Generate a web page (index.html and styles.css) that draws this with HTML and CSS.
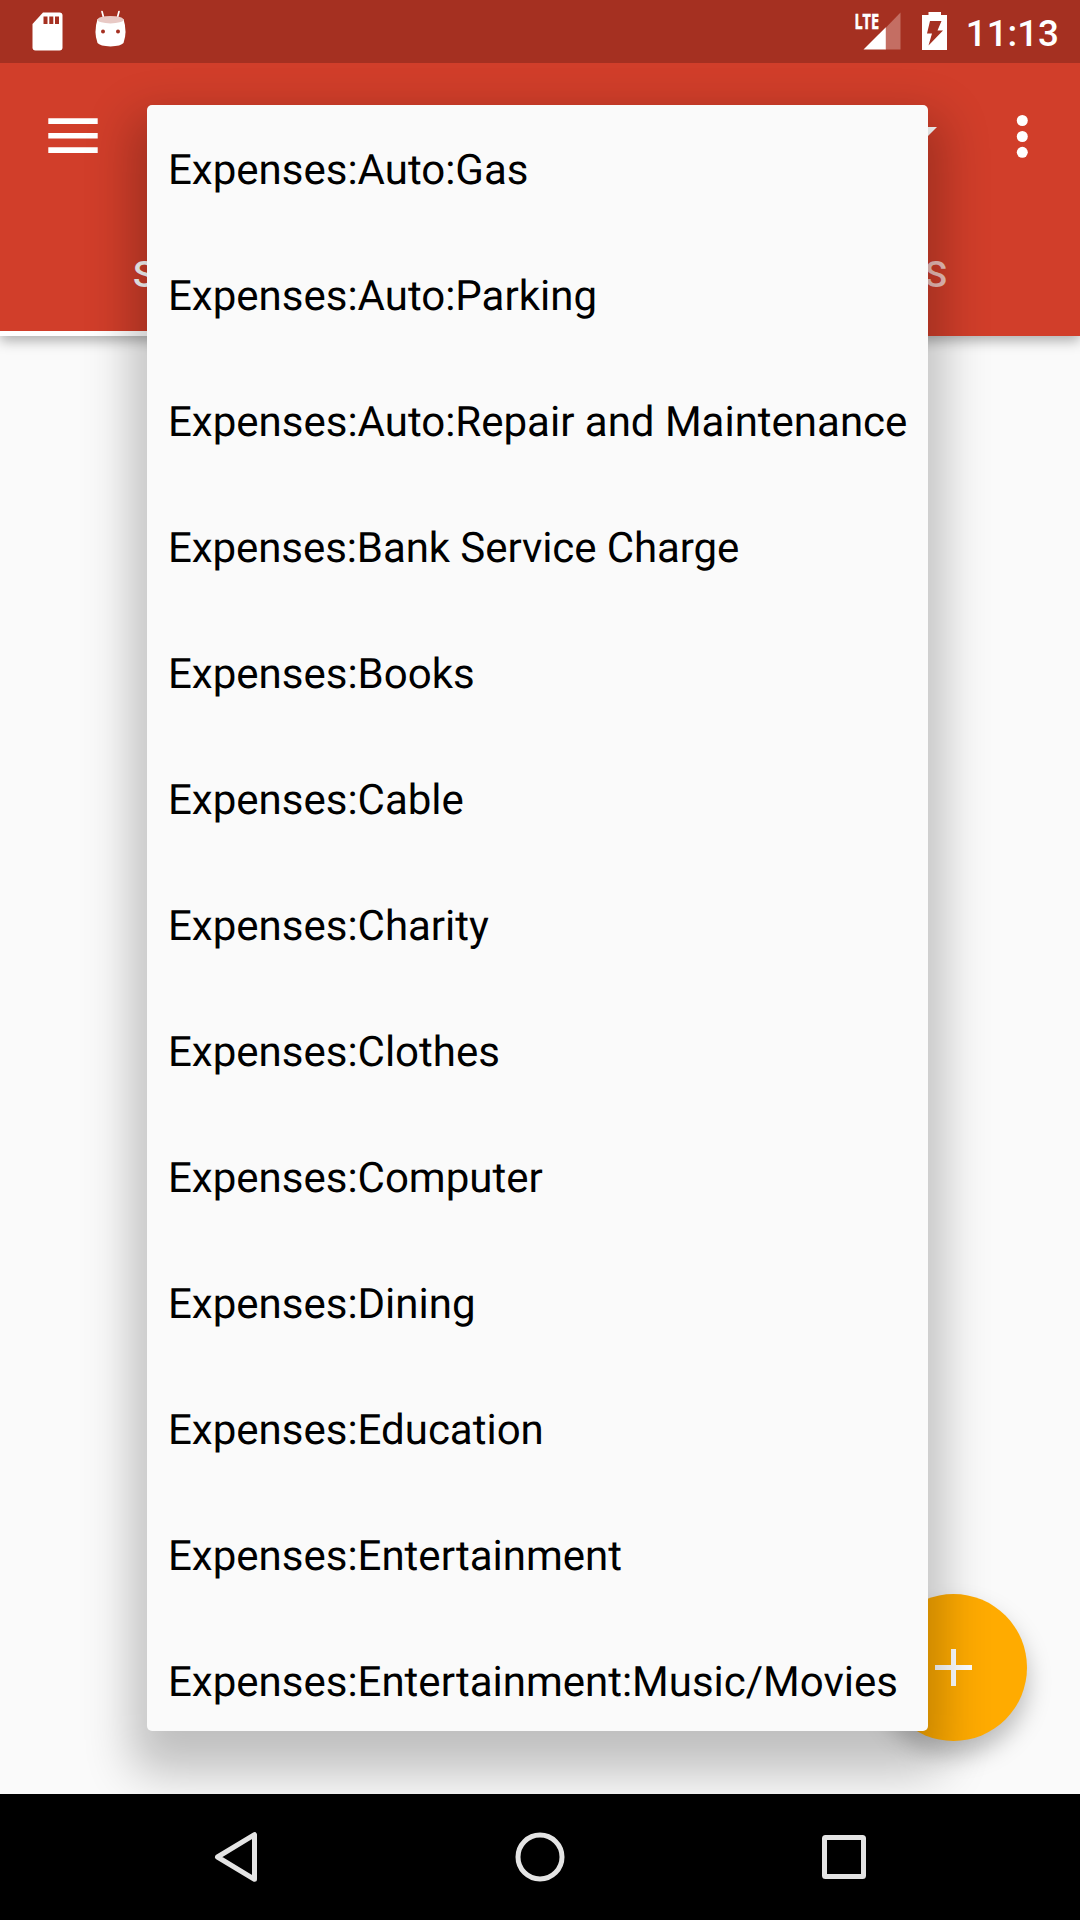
FILE: index.html
```html
<!DOCTYPE html>
<html lang="en">
<head>
<meta charset="utf-8">
<title>Accounts</title>
<link rel="stylesheet" href="styles.css">
</head>
<body>
<div class="screen">
  <header class="status">
    <svg class="notifications" width="140" height="63" viewBox="0 0 140 63">
      <path fill="#fff" d="M43 12.500h16.500a3 3 0 0 1 3 3v32a3 3 0 0 1-3 3h-24a3 3 0 0 1-3-3V24z"/>
      <path fill="#a53021" d="M43.500 16.500h4V24h-4zM49.300 16.500h4V24h-4zM55 16.500h4V24h-4z"/>
      <path fill="none" stroke="#fff" stroke-width="1.700" stroke-linecap="round" d="M102 11.500l1.700 6.500M119 11.500l-1.700 6.500"/>
      <path fill="#fff" d="M97.500 19Q93.500 32 97.500 43Q100 46 110.500 46.500Q121 46 123.500 43Q127.500 32 123.500 19z"/>
      <ellipse cx="110.500" cy="19.700" rx="13" ry="3.700" fill="#e8c9c5"/>
      <circle cx="103" cy="31.500" r="2" fill="#a53021"/><circle cx="118" cy="31.500" r="2" fill="#a53021"/>
    </svg>
    <div class="system">
      <svg width="110" height="63" viewBox="850 0 110 63">
        <text class="network" x="854.500" y="29" textLength="24.500" lengthAdjust="spacingAndGlyphs">LTE</text>
        <path fill="#c46e63" d="M885.500 28L900.500 12.500V49.500H885.500z"/>
        <path fill="#fff" d="M863.500 49.500L885.800 27.200V49.500z"/>
        <path fill="#fff" d="M928.500 12h12.500v3h6v35h-25V15h6.500z"/>
        <path fill="#a53021" d="M930 21h11.500l-4 9.500h5.500L928.500 45.500l3.500-12h-5z"/>
      </svg>
      <span class="clock">11:13</span>
    </div>
  </header>
  <main class="app">
    <div class="appbar">
      <div class="toolbar">
        <svg class="menu" width="50" height="36" viewBox="0 0 50 36"><path fill="#fff" d="M.3.300h49.400v5.700H.3zM.3 15h49.400v5.500H.3zM.3 29.300h49.400V35H.3z"/></svg>
        <svg class="caret" width="26" height="13" viewBox="0 0 26 13"><path fill="#fff" d="M0 0h26L13 13z"/></svg>
        <svg class="more" width="12" height="44" viewBox="0 0 12 44"><g fill="#fff"><circle cx="6.300" cy="6.500" r="5.500"/><circle cx="6.300" cy="22.500" r="5.500"/><circle cx="6.300" cy="38.300" r="5.500"/></g></svg>
      </div>
      <nav class="tabs">
        <div class="tab tab-active">S</div>
        <div class="tab tab-last">S</div>
      </nav>
    </div>
    <button class="fab" aria-label="Add"><svg width="37" height="37" viewBox="0 0 37 37"><path stroke="#fff" stroke-width="5" d="M18.500 0v37M0 18.500h37"/></svg></button>
    <ul class="popup">
      <li>Expenses:Auto:Gas</li>
      <li>Expenses:Auto:Parking</li>
      <li>Expenses:Auto:Repair and Maintenance</li>
      <li class="tight">Expenses:Bank Service Charge</li>
      <li>Expenses:Books</li>
      <li>Expenses:Cable</li>
      <li>Expenses:Charity</li>
      <li>Expenses:Clothes</li>
      <li>Expenses:Computer</li>
      <li>Expenses:Dining</li>
      <li>Expenses:Education</li>
      <li>Expenses:Entertainment</li>
      <li>Expenses:Entertainment:Music/Movies</li>
    </ul>
  </main>
  <footer class="navbar">
    <svg width="1080" height="126" viewBox="0 1794 1080 126">
      <g fill="none" stroke="#e4e4e4" stroke-width="5" stroke-linejoin="round">
        <path d="M254.500 1834.700v44.600L217.500 1857z"/>
        <circle cx="540" cy="1857" r="22"/>
        <rect x="824.500" y="1837.500" width="39" height="39" rx="1"/>
      </g>
    </svg>
  </footer>
</div>
</body>
</html>
```

FILE: styles.css
```css
* { box-sizing: border-box; }
body { margin: 0; font-family: Roboto, sans-serif; }
.screen { display: flex; flex-direction: column; width: 1080px; height: 1920px; overflow: hidden; }
.status { display: flex; justify-content: space-between; height: 63px; background: #a53021; color: #fff; }
.status svg { display: block; }
.system { display: flex; gap: 6px; padding-right: 21px; }
.network { font: bold 22px "Open Sans", sans-serif; fill: #fff; stroke: #fff; stroke-width: .6px; }
.clock { font-size: 36.75px; font-weight: 500; line-height: 67px; }
.app { position: relative; flex: 1; overflow: hidden; background: #fafafa; }
.appbar { display: flex; flex-direction: column; height: 273px; background: #d13e2a; box-shadow: 0 5px 12px rgba(0, 0, 0, .3); }
.toolbar { display: flex; height: 147px; padding: 0 52px 0 48px; }
.menu { margin-top: 55px; }
.caret { margin: 64px 0 0 auto; }
.more { margin: 51px 0 0 79px; }
.tabs { display: grid; grid-template-columns: 1fr 1fr; flex: 1; }
.tab { padding: 43px 133px 0; color: rgba(255, 255, 255, .7); font-size: 36.75px; font-weight: 500; line-height: 43px; }
.tab-active { color: #fff; border-bottom: 5px solid #fff; }
.tab-last { text-align: right; }
.fab { position: absolute; left: 880px; top: 1531px; display: grid; place-items: center; width: 147px; height: 147px; padding: 0; border: 0; border-radius: 50%; background: #ffab00; box-shadow: 0 14px 24px rgba(0, 0, 0, .26); }
.popup { position: absolute; left: 147px; top: 42px; width: 781px; height: 1626px; margin: 0; padding: 0 21px; overflow: hidden; list-style: none; border-radius: 5px; background: #fafafa; box-shadow: 0 26px 48px 15px rgba(0, 0, 0, .24); color: #000; font-size: 42px; text-rendering: geometricPrecision; }
.popup li { height: 126px; line-height: 132px; white-space: nowrap; }
.popup .tight { letter-spacing: -.08px; }
.navbar { height: 126px; background: #000; }
.navbar svg { display: block; }
```
